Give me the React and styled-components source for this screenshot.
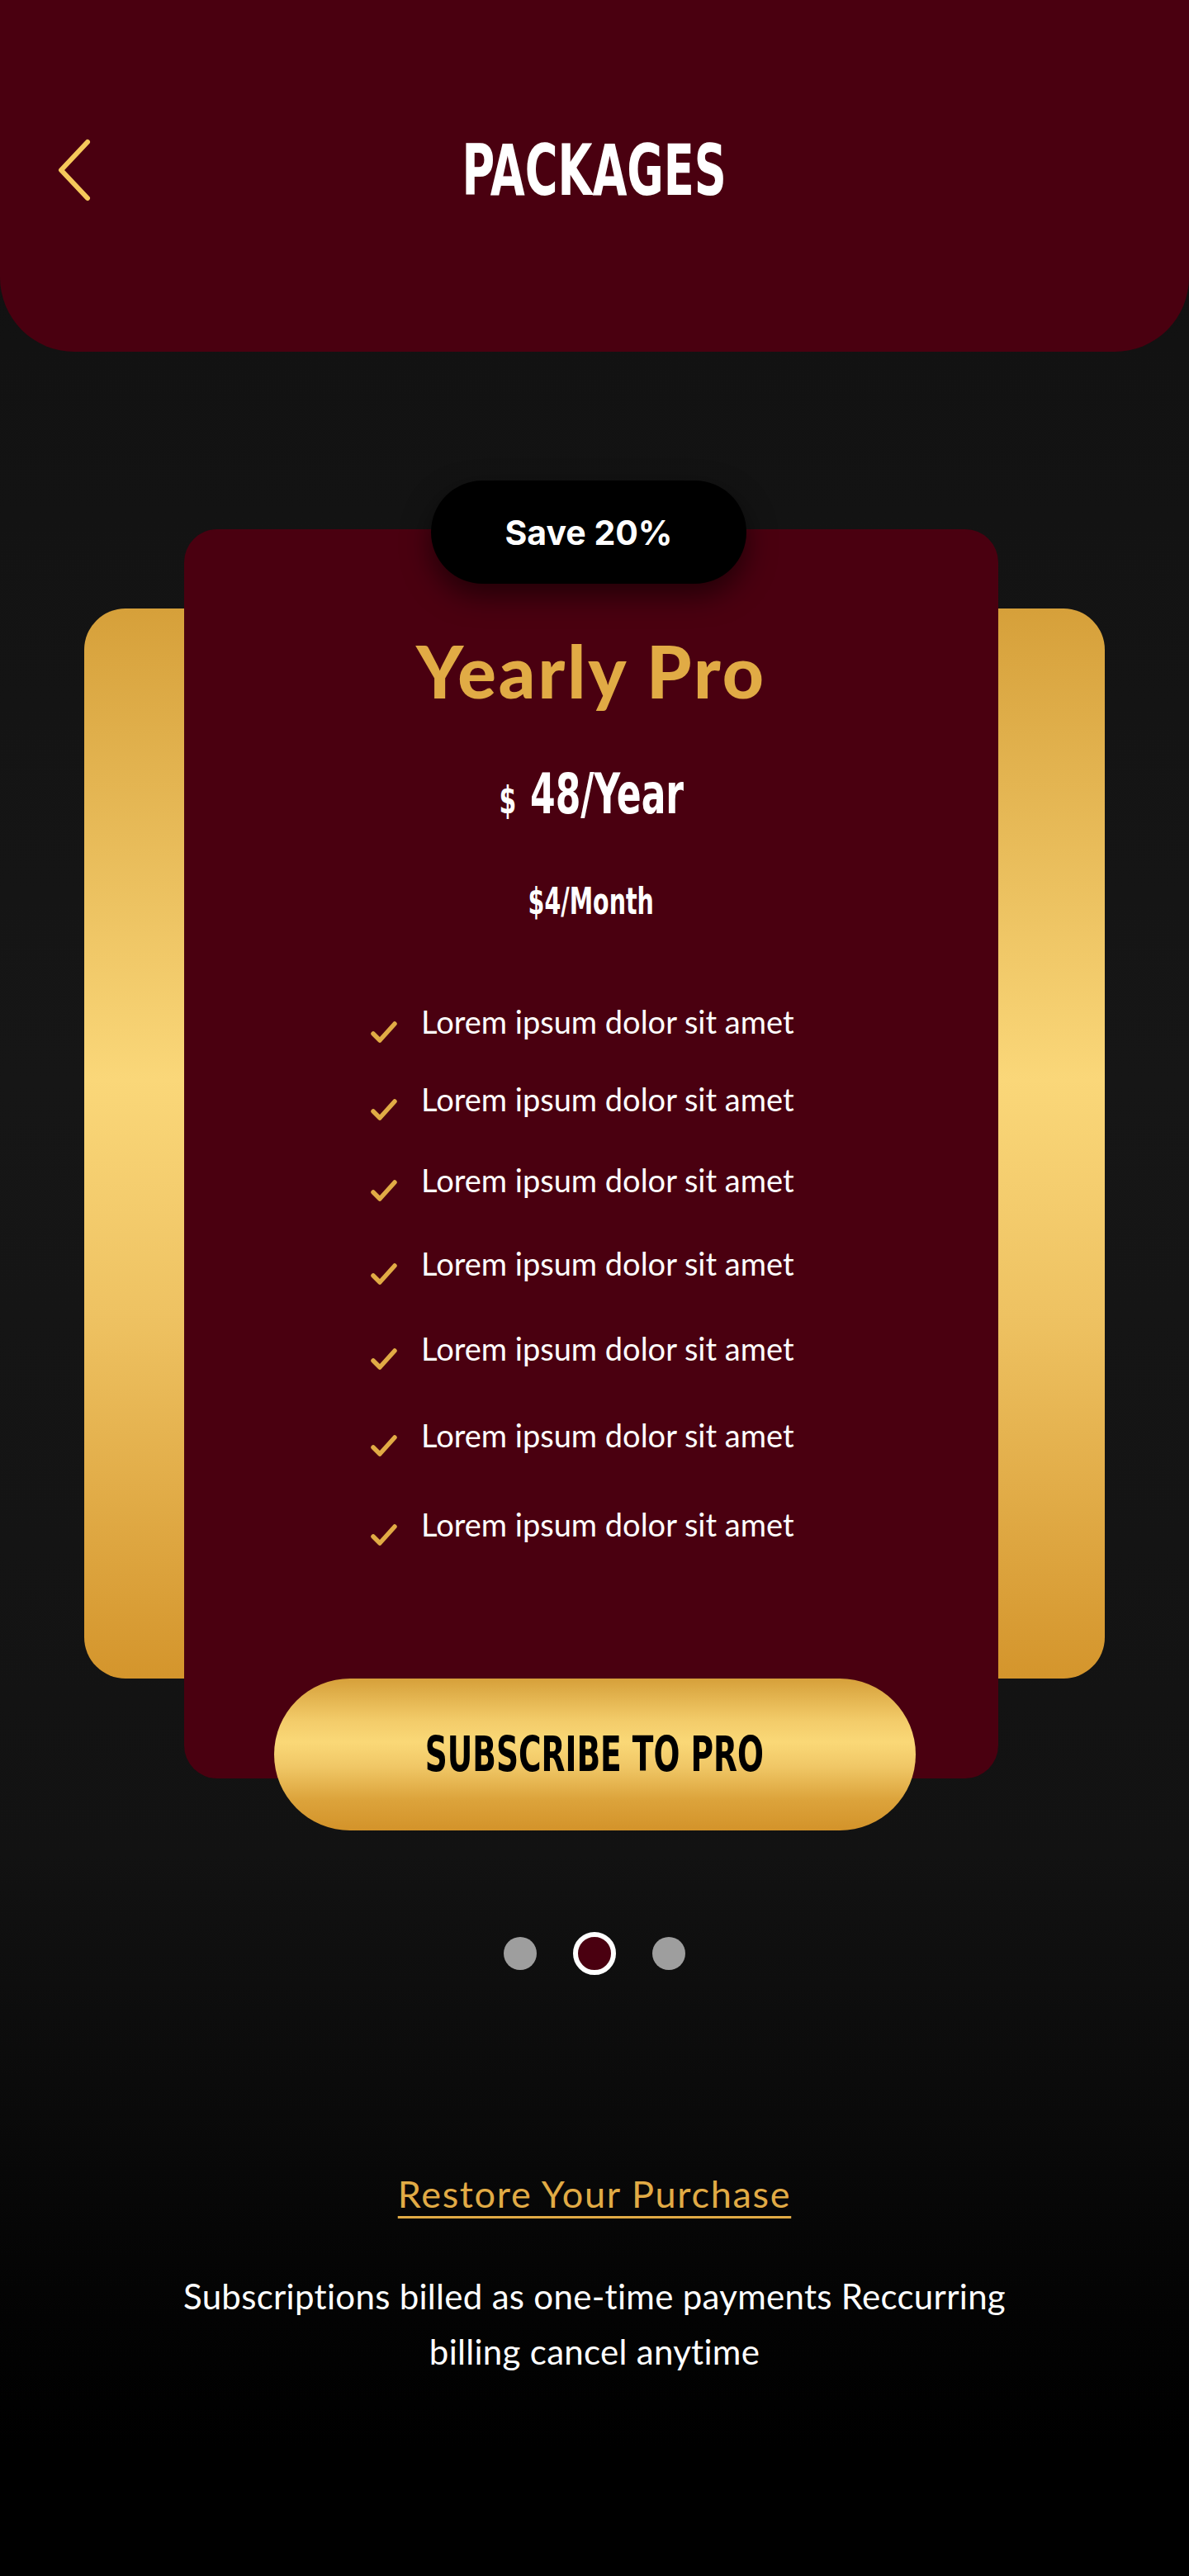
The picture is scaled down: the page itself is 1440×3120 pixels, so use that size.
import React from "react";
import styled, { createGlobalStyle } from "styled-components";

const colors = {
  maroon: "#4a0010",
  gold: "#e1ab45",
  chevron: "#f6c95b",
  grey: "#9e9e9e",
  white: "#ffffff",
};

const fonts = {
  body: '"Lato", "Noto Sans", sans-serif',
  condensed: '"DejaVu Sans Condensed", "DejaVu Sans", sans-serif',
  badge: '"Inter", "Noto Sans", sans-serif',
};

const goldGradient = `linear-gradient(180deg, #d6a03a 0%, #fad779 44%, #eec262 66%, #d4952c 100%)`;

const GlobalStyle = createGlobalStyle`
  html, body {
    margin: 0;
    padding: 0;
    background: #000;
  }
  * { box-sizing: border-box; }
`;

const Page = styled.main`
  min-height: 3120px;
  width: 1440px;
  background: linear-gradient(
    180deg,
    #101010 0%,
    #131313 20%,
    #161616 42%,
    #141414 60%,
    #121212 72%,
    #0a0a0a 82%,
    #030303 90%,
    #000 95%
  );
  display: flex;
  flex-direction: column;
  align-items: center;
  font-family: ${fonts.body};
  color: ${colors.white};
`;

const Header = styled.header`
  width: 100%;
  height: 426px;
  background: ${colors.maroon};
  border-radius: 0 0 90px 90px;
  display: grid;
  grid-template-columns: 1fr auto 1fr;
  align-items: center;
  padding: 0 69px 14px;
`;

const BackButton = styled.button`
  justify-self: start;
  background: none;
  border: 0;
  padding: 0;
  display: flex;
  cursor: pointer;
`;

const Squeeze = styled.span`
  display: inline-block;
  transform: scaleX(${(p) => p.$x || 0.72});
  transform-origin: center;
  white-space: nowrap;
`;

const Title = styled.h1`
  margin: 0;
  font-family: ${fonts.condensed};
  font-stretch: condensed;
  font-weight: 700;
  font-size: 86px;
  line-height: 1;
  color: ${colors.white};
`;

const Stage = styled.section`
  display: grid;
  justify-items: center;
  margin-top: 156px;
  & > * {
    grid-area: 1 / 1;
  }
`;

const GoldPanel = styled.div`
  width: 1236px;
  height: 1296px;
  margin-top: 155px;
  border-radius: 50px;
  background: ${goldGradient};
`;

const Card = styled.article`
  width: 986px;
  height: 1513px;
  margin-top: 59px;
  margin-right: 8px;
  border-radius: 40px;
  background: ${colors.maroon};
  z-index: 1;
  display: flex;
  flex-direction: column;
  align-items: center;
  padding-top: 128px;
`;

const Badge = styled.div`
  width: 382px;
  height: 125px;
  margin-right: 14px;
  border-radius: 63px;
  background: #000;
  box-shadow: 0 14px 34px rgba(0, 0, 0, 0.55);
  z-index: 2;
  display: flex;
  align-items: center;
  justify-content: center;
  font-family: ${fonts.badge};
  font-weight: 700;
  font-size: 41px;
  color: ${colors.white};
`;

const PlanName = styled.h2`
  margin: 0;
  font-family: ${fonts.body};
  font-weight: 900;
  font-size: 87px;
  letter-spacing: 3px;
  line-height: 1;
  color: ${colors.gold};
`;

const Price = styled.div`
  margin-top: 72px;
  font-family: ${fonts.condensed};
  font-stretch: condensed;
  font-weight: 700;
  font-size: 68px;
  line-height: 1;
  color: ${colors.white};
  display: flex;
  align-items: baseline;
`;

const Currency = styled.span`
  font-size: 46px;
  margin-right: 2px;
`;

const PerMonth = styled.div`
  margin-top: 74px;
  font-family: ${fonts.condensed};
  font-stretch: condensed;
  font-weight: 700;
  font-size: 44px;
  line-height: 1;
  color: ${colors.white};
`;

const Features = styled.ul`
  list-style: none;
  margin: 77px 0 0 225px;
  padding: 0;
  align-self: flex-start;
`;

const Feature = styled.li`
  height: ${(p) => p.$h}px;
  display: flex;
  align-items: center;
  gap: 28px;
  font-size: 38px;
  line-height: 1;
  font-weight: 400;
  color: ${colors.white};

  svg {
    margin-top: 26px;
    flex: none;
  }
`;

const SubscribeButton = styled.button`
  width: 777px;
  height: 184px;
  margin-top: 1451px;
  border: 0;
  border-radius: 92px;
  background: linear-gradient(180deg, #d6a03a 0%, #f3cc6a 28%, #fad877 42%, #f0c766 58%, #dca33b 80%, #d3932a 100%);
  z-index: 2;
  display: flex;
  align-items: center;
  justify-content: center;
  font-family: ${fonts.condensed};
  font-stretch: condensed;
  font-weight: 700;
  font-size: 58px;
  line-height: 1;
  color: #000;
  cursor: pointer;
`;

const Dots = styled.div`
  margin-top: 123px;
  height: 52px;
  display: flex;
  align-items: center;
  gap: 44px;
`;

const Dot = styled.span`
  width: ${(p) => (p.$active ? 52 : 40)}px;
  height: ${(p) => (p.$active ? 52 : 40)}px;
  border-radius: 50%;
  background: ${(p) => (p.$active ? colors.maroon : colors.grey)};
  border: ${(p) => (p.$active ? `6px solid ${colors.white}` : "none")};
`;

const Restore = styled.a`
  margin-top: 238px;
  font-size: 45px;
  line-height: 1.2;
  letter-spacing: 1.7px;
  color: ${colors.gold};
  text-decoration: underline;
  text-decoration-thickness: 3px;
  text-underline-offset: 10px;
  cursor: pointer;
`;

const Disclaimer = styled.p`
  margin: 64px 0 0;
  max-width: 1100px;
  text-align: center;
  font-size: 42px;
  letter-spacing: 0.3px;
  line-height: 67px;
  color: ${colors.white};
`;

const Check = () => (
  <svg width="34" height="30" viewBox="0 0 34 30" fill="none">
    <path
      d="M4 17 L12 25 L30 5"
      stroke={colors.gold}
      strokeWidth="5.5"
      strokeLinecap="round"
      strokeLinejoin="round"
    />
  </svg>
);

// row heights grow slightly down the list, as in the design
const features = [91, 97, 100, 102, 103, 107, 110].map((h) => ({
  text: "Lorem ipsum dolor sit amet",
  h,
}));

export default function App() {
  return (
    <>
      <GlobalStyle />
      <Page>
        <Header>
          <BackButton aria-label="Back">
            <svg width="42" height="76" viewBox="0 0 42 76" fill="none">
              <path
                d="M37 4 L5 38 L37 72"
                stroke={colors.chevron}
                strokeWidth="6"
                strokeLinecap="round"
                strokeLinejoin="round"
              />
            </svg>
          </BackButton>
          <Title>
            <Squeeze $x={0.7}>PACKAGES</Squeeze>
          </Title>
          <span />
        </Header>

        <Stage>
          <GoldPanel />
          <Card>
            <PlanName>Yearly Pro</PlanName>
            <Price>
              <Squeeze $x={0.72}>
                <Currency>$</Currency> 48/Year
              </Squeeze>
            </Price>
            <PerMonth>
              <Squeeze $x={0.72}>$4/Month</Squeeze>
            </PerMonth>
            <Features>
              {features.map((f, i) => (
                <Feature key={i} $h={f.h}>
                  <Check />
                  {f.text}
                </Feature>
              ))}
            </Features>
          </Card>
          <Badge>Save 20%</Badge>
          <SubscribeButton>
            <Squeeze $x={0.72}>SUBSCRIBE TO PRO</Squeeze>
          </SubscribeButton>
        </Stage>

        <Dots>
          <Dot />
          <Dot $active />
          <Dot />
        </Dots>

        <Restore>Restore Your Purchase</Restore>
        <Disclaimer>
          Subscriptions billed as one-time payments Reccurring billing cancel anytime
        </Disclaimer>
      </Page>
    </>
  );
}
